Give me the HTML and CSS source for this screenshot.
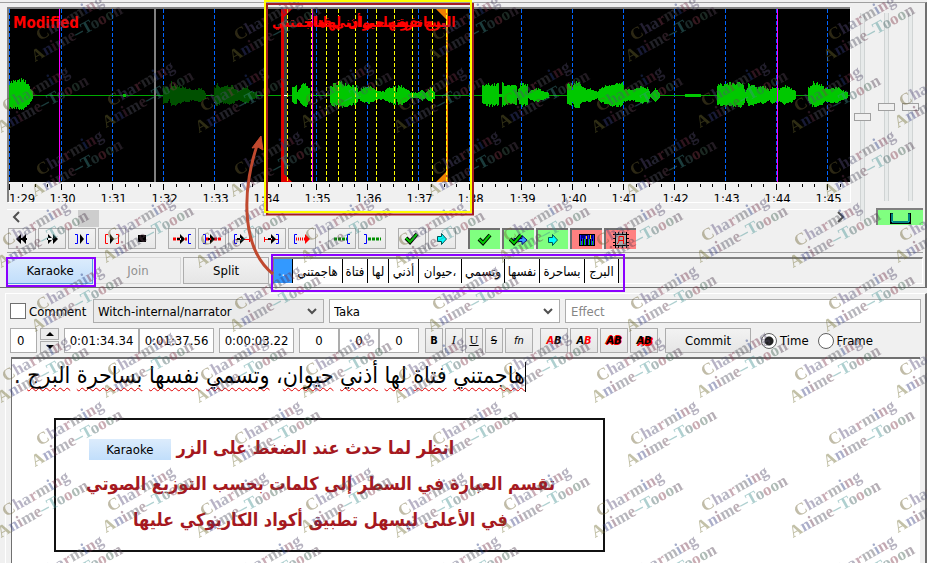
FILE: index.html
```html
<!DOCTYPE html>
<html lang="en">
<head>
<meta charset="utf-8">
<title>Subtitle editor</title>
<link rel="stylesheet" href="styles.css">
</head>
<body>
<main class="app">
  <section class="audio">
    <div class="audio-top">
      <div class="display-col">
        <svg class="display" id="display" role="img" aria-label="Audio waveform">
          <rect class="bg" width="100%" height="173"/>
          <g transform="translate(-9 -9)">
            <rect x="287" y="9" width="160" height="173" fill="#000"/>
            <g id="grid"></g>
            <rect x="9" y="95" width="2000" height="1" fill="#00a800"/>
            <path id="wave" fill="#00c800"/>
            <path id="wave-dim" fill="#005000"/>
            <rect x="154" y="9" width="2" height="173" fill="#808080"/>
            <path d="M59.5 9V182M312.500 9V182M777.500 9V182" stroke="#f0f"/>
            <rect x="283" y="9" width="4" height="173" fill="#404040"/>
            <rect x="283" y="95" width="4" height="1" fill="#fff"/>
            <rect x="281" y="9" width="3" height="173" fill="#e00000"/>
            <path d="M284 9h8l-8 8zM284 174l8 8h-8z" fill="#e00000"/>
            <rect x="446" y="9" width="2" height="173" fill="#f08000"/>
            <path d="M446 9h-10l10 10zM446 172l-10 10h10z" fill="#f08000"/>
            <path d="M287.500 9V182M311.500 9V182M326.500 9V182M338.500 9V182M355.500 9V182M376.500 9V182M394.500 9V182M412.500 9V182M432.500 9V182M446.500 9V182" stroke="#ff0" stroke-dasharray="4 2"/>
            <g class="syllables">
              <text x="299" y="27">هاجمتني</text><text x="319" y="27">فتاة</text><text x="332" y="27">لها</text><text x="347" y="27">أذني</text><text x="366" y="27">حيوان</text><text x="385" y="27">وتسمي</text><text x="403" y="27">نفسها</text><text x="422" y="27">بساحرة</text><text x="440" y="27">البرج</text>
            </g>
            <text class="modified" x="13" y="28">Modified</text>
            <g id="ruler"></g>
          </g>
        </svg>
        <div class="scrollbar">
          <button aria-label="Scroll left"><svg width="8" height="12"><path d="M7 1L2 6l5 5"/></svg></button>
          <div class="scroll-track"><span class="scroll-thumb"></span></div>
          <button aria-label="Scroll right"><svg width="8" height="12"><path d="M1 1l5 5-5 5"/></svg></button>
        </div>
      </div>
      <div class="sliders">
        <input class="long" type="range" value="50" aria-label="Horizontal zoom">
        <div class="pair">
          <div class="pair-row">
            <input type="range" value="50" aria-label="Vertical zoom">
            <input type="range" value="50" aria-label="Volume">
          </div>
          <button class="link" aria-label="Link zoom and volume"><svg width="22" height="12"><path d="M1.500 1v9.500h18V1" fill="none" stroke="#000" stroke-width="3"/><path d="M2 1.500v8.500h17V1.500" fill="none" stroke="#0ff"/></svg></button>
        </div>
      </div>
    </div>

    <div class="toolbar">
      <div class="group">
        <button aria-label="Previous line"><svg><path d="M9 5v10l-5-5zM14 5v10l-5-5zM9 9h6v2H9z"/></svg></button>
        <button aria-label="Next line"><svg><path d="M6 5v10l5-5zM11 5v10l5-5zM5 9h5v2H5z"/></svg></button>
        <button aria-label="Play selection"><svg><path class="b" d="M3 5.500h2.500v9H3M17 5.500h-2.500v9H17"/><path d="M8 5v10l4-5z"/></svg></button>
        <button aria-label="Play line"><svg><path class="r" d="M6 5.500H3.500v9H6M14 5.500h2.500v9H14"/><path d="M8 5v10l4-5z"/></svg></button>
        <button aria-label="Stop"><svg><path d="M6 6h8v7H6z"/></svg></button>
      </div>
      <div class="group">
        <button aria-label="Play before start"><svg><path class="r dots" d="M1 10h14"/><path d="M8 5v10l5-5zM5 9h4v2H5z"/><path class="b" d="M19 5.500h-2.500v9H19"/></svg></button>
        <button aria-label="Play after end"><svg><path class="r dots" d="M4 10h15"/><path d="M8 5v10l5-5zM6 9h3v2H6z"/><path class="b" d="M1 5.500h2.500v9H1"/></svg></button>
        <button aria-label="Play first part"><svg><path class="r" d="M4 10.500h14M17.500 8v5"/><path d="M8 5v10l5-5zM5 9h4v2H5z"/><path class="b" d="M5 5.500H2.500v9H5"/></svg></button>
        <button aria-label="Play last part"><svg><path class="r" d="M2 10.500h14M2.500 8v5"/><path d="M9 5v10l5-5zM6 9h4v2H6z"/><path class="b" d="M14 5.500h2.500v9H14"/></svg></button>
        <button aria-label="Play to end"><svg><path class="r dots2" d="M4 10h10"/><path d="M13 5v10l5-5z" fill="#f00"/><path class="b" d="M5 5.500H2.500v9H5"/></svg></button>
      </div>
      <div class="group">
        <button aria-label="Lead in"><svg><path class="g dots" d="M2 10h13"/><path class="b" d="M18 5.500h-2.500v9H18"/></svg></button>
        <button aria-label="Lead out"><svg><path class="g dots" d="M6 10h13"/><path class="b" d="M2 5.500h2.500v9H2"/></svg></button>
      </div>
      <div class="group">
        <button aria-label="Commit"><svg><path class="tick" d="M4 9l4 4 7-8"/><path class="tick2" d="M4 9l4 4 7-8"/></svg></button>
        <button aria-label="Go to selection"><svg><path class="arrow" d="M5.500 7.500h4v-3l5 5.500-5 5.500v-3h-4z"/></svg></button>
      </div>
      <div class="group toggles">
        <button class="on" aria-label="Auto commit"><svg><path class="tick" d="M4 9l4 4 7-8"/><path class="tick2" d="M4 9l4 4 7-8"/></svg></button>
        <button class="on" aria-label="Auto next"><svg><path d="M5 8.500h8v-3l5 4.500-5 4.500v-3H5z" fill="#39f" stroke="#008"/><path class="tick" d="M1 9l4 4 7-8"/><path class="tick2" d="M1 9l4 4 7-8"/></svg></button>
        <button class="on" aria-label="Auto scroll"><svg><path class="arrow" d="M5.500 7.500h4v-3l5 5.500-5 5.500v-3h-4z"/></svg></button>
        <button class="off" aria-label="Spectrum mode"><svg><path d="M2 4h16v12H2z"/><path d="M3 5h14v4H3z" fill="#008"/><path d="M3.500 5v10M5.500 8v7M8.500 6v9M11.500 5v10M14.500 8v7M16.500 5v10" stroke="#22f"/><path d="M4.500 11v4M7.500 9v6M12.500 9v6M15.500 11v4" stroke="#0c0"/><path d="M9.500 6v3M13.500 5v4" stroke="#fc0"/></svg></button>
        <button class="off" aria-label="Medusa shortcuts"><svg><path d="M4 3h12v14H4z" fill="#aaa"/><path d="M4.500 2v16M15.500 2v16M2 4.500h16M2 15.500h16M2 8.500h3M2 12.500h3M15 8.500h3M15 12.500h3M7.500 2v3M11.500 2v3M7.500 15v3M11.500 15v3" stroke="#000"/><path class="r" d="M6 14c2-1 2-4 2-7.500h4.500V14M8 10.500h5"/></svg></button>
      </div>
    </div>

    <div class="karaoke-row">
      <button class="btn active">Karaoke</button>
      <button class="btn" disabled>Join</button>
      <button class="btn">Split</button>
      <div class="strip">
        <span class="w1 sel">.</span><span class="w2">هاجمتني</span><span class="w3">فتاة</span><span class="w4">لها</span><span class="w5">أذني</span><span class="w6" dir="rtl">،حيوان</span><span class="w7">وتسمي</span><span class="w8">نفسها</span><span class="w9">بساحرة</span><span class="w10">البرج</span>
      </div>
    </div>
  </section>

  <section class="edit">
    <div class="fields">
      <label class="check"><input type="checkbox">Comment</label>
      <select aria-label="Style"><option>Witch-internal/narrator</option></select>
      <select class="white" aria-label="Actor"><option>Taka</option></select>
      <input class="effect" type="text" placeholder="Effect" aria-label="Effect">
    </div>
    <div class="timing">
      <div class="spin">
        <input type="text" value="0" aria-label="Layer">
        <div class="arrows"><button aria-label="Increase"><svg width="8" height="4"><path d="M0 4l4-4 4 4z"/></svg></button><button aria-label="Decrease"><svg width="8" height="4"><path d="M0 0l4 4 4-4z"/></svg></button></div>
      </div>
      <div class="joined">
        <input class="time" type="text" value="0:01:34.34" aria-label="Start"><input class="time" type="text" value="0:01:37.56" aria-label="End">
      </div>
      <input class="time" type="text" value="0:00:03.22" aria-label="Duration">
      <div class="joined">
        <input class="margin" type="text" value="0" aria-label="Left margin"><input class="margin" type="text" value="0" aria-label="Right margin"><input class="margin" type="text" value="0" aria-label="Vertical margin">
      </div>
      <div class="fmt">
        <button><b>B</b></button><button><i class="ser">I</i></button><button><u class="ser">U</u></button><button><s>S</s></button><button class="wide"><i>fn</i></button>
      </div>
      <div class="fmt colours">
        <button class="wide"><span class="red">A</span>B</button><button class="wide">A<span class="red">B</span></button><button class="wide outline">AB</button><button class="wide shadow">AB</button>
      </div>
      <button class="commit">Commit</button>
      <div class="radios">
        <label><input type="radio" name="unit" checked>Time</label>
        <label><input type="radio" name="unit">Frame</label>
      </div>
    </div>
    <div class="editor">
      <div class="line" dir="rtl" contenteditable="true" spellcheck="false" role="textbox" aria-label="Subtitle text"><span class="caret"></span><span class="sp">هاجمتني</span> <span class="sp">فتاة</span> <span class="sp">لها</span> <span class="sp">أذني</span> <span class="sp">حيوان</span>، <span class="sp">وتسمي</span> <span class="sp">نفسها</span> <span class="sp">بساحرة</span> <span class="sp">البرج</span> .</div>
      <div class="callout" dir="rtl">
        <p class="first">انظر لما حدث عند الضغط على الزر <span class="chip">Karaoke</span></p>
        <p>تقسم العبارة في السطر إلى كلمات بحسب التوزيع الصوتي</p>
        <p>في الأعلى ليسهل تطبيق أكواد الكاريوكي عليها</p>
      </div>
    </div>
  </section>

  <svg class="marks" aria-hidden="true">
    <defs>
      <g id="wm">
        <text class="wm-a" transform="translate(6 17) rotate(-30)"><tspan fill="#6b6030">C</tspan><tspan fill="#554a78">h</tspan><tspan fill="#505070">a</tspan><tspan fill="#803a50">r</tspan><tspan fill="#505058">m</tspan><tspan fill="#283c80">i</tspan><tspan fill="#703048">n</tspan><tspan fill="#504868">g</tspan></text>
        <text class="wm-b" transform="translate(1 38) rotate(-29)"><tspan fill="#706c30">A</tspan><tspan fill="#383e80">n</tspan><tspan fill="#603048">i</tspan><tspan fill="#505060">m</tspan><tspan fill="#604050">e</tspan><tspan fill="#409090">–T</tspan><tspan fill="#406060">o</tspan><tspan fill="#803848">o</tspan><tspan fill="#406050">o</tspan><tspan fill="#504050">n</tspan></text>
      </g>
      <pattern id="wmtile" width="198" height="135" patternUnits="userSpaceOnUse" x="0" y="-39">
        <use href="#wm" x="34" y="63"/>
        <use href="#wm" x="105" y="129"/><use href="#wm" x="105" y="-6"/>
        <use href="#wm" x="0" y="134"/><use href="#wm" x="0" y="-1"/>
        <use href="#wm" x="198" y="134"/><use href="#wm" x="198" y="-1"/>
      </pattern>
    </defs>
    <rect width="100%" height="100%" fill="url(#wmtile)" opacity=".42"/>
    <g fill="none" stroke-width="2">
      <path d="M267 213.500V4H473V214.500H266" stroke="#a51c24"/>
      <path d="M265 1H471V212H265z" stroke="#ff0"/>
      <path d="M7 258H95V286H7zM272 255H624V291H272z" stroke="#8b00ff"/>
      <path d="M273 274C243 250 240 196 258 142" stroke="#c0492f" stroke-width="3"/>
      <path d="M252 148L261 136l2 14-5-3z" fill="#c0492f" stroke="#c0492f" stroke-width="1"/>
    </g>
  </svg>
</main>
<script src="wave.js"></script>
</body>
</html>
```
FILE: styles.css
```css
* { box-sizing: border-box; }
body { margin: 0; background: #f0f0f0; color: #000; font: 13px "DejaVu Sans Condensed", "DejaVu Sans", sans-serif; }
button, input, select { font: inherit; color: inherit; margin: 0; padding: 0; }
p { margin: 0; }
.app { position: relative; min-height: 100vh; overflow: hidden; display: flex; flex-direction: column; gap: 5px; }

.audio { margin-top: 2px; padding: 4px 2px 1px 7px; border-top: 1px solid #a0a0a0; border-right: 2px solid #707070; border-bottom: 1px solid #707070; }
.audio-top { display: flex; gap: 4px; }
.display-col { flex: 1; min-width: 0; }
.display { display: block; width: 100%; height: 195px; border: solid #808080; border-width: 2px 0 0 2px; box-shadow: 1px 1px #fff; }
.display .bg { fill: #000; }
.display text { font-family: "DejaVu Sans Condensed", "DejaVu Sans", sans-serif; }
.syllables text { font-size: 14px; font-weight: bold; fill: #f00; text-anchor: middle; }
.display .modified { font-size: 15px; font-weight: bold; fill: #f00; }
.scrollbar { display: flex; align-items: center; height: 18px; margin-top: 7px; border-top: 1px solid #fff; }
.scrollbar button { width: 18px; height: 17px; border: 0; background: none; }
.scrollbar path { fill: none; stroke: #505050; stroke-width: 2; }
.scroll-track { flex: 1; height: 17px; }
.scroll-thumb { display: block; width: 21px; height: 17px; margin-left: 53px; background: #cdcdcd; }

.sliders { display: flex; gap: 5px; padding-top: 6px; }
.pair { width: 47px; display: flex; flex-direction: column; gap: 7px; }
.pair-row { display: flex; gap: 7px; padding-left: 2px; }
input[type="range"] { appearance: none; writing-mode: vertical-lr; direction: rtl; width: 17px; height: 188px; background: linear-gradient(90deg, transparent 6px, #d0d4d4 6px, #d0d4d4 7px, #e7eaea 7px, #e7eaea 10px, #d0d4d4 10px, #d0d4d4 11px, transparent 11px); }
input[type="range"].long { height: 208px; }
input[type="range"]::-webkit-slider-thumb { appearance: none; width: 17px; height: 8px; border: 1px solid #a0a0a0; background: #f0f0f0; }
.link { height: 17px; background: #80ff80; border: solid #808080; border-width: 2px 0 0 2px; }
.link svg { display: block; margin: auto; }

.toolbar { display: flex; gap: 12px; padding: 1px 0 2px 1px; border-bottom: 1px solid #a0a0a0; height: 26px; }
.group { display: flex; gap: 2px; }
.group button { width: 28px; height: 21px; border: 1px solid #adadad; background: linear-gradient(#f2f2f2, #e8e8e8); display: flex; align-items: center; justify-content: center; }
.group svg { width: 20px; height: 20px; flex: none; }
.toggles button { width: 32px; border-width: 2px 0 0 2px; border-color: #707070; }
.group .on { background: #80ff80; }
.group .off { background: #ff8080; }
.r, .b, .g { fill: none; }
.r { stroke: #f00; }
.b { stroke: #00f; }
.g { stroke: #009000; }
.dots { stroke-width: 3; stroke-dasharray: 3 1; }
.dots2 { stroke-width: 3; stroke-dasharray: 1 1; }
.tick { fill: none; stroke: #000; stroke-width: 4; }
.tick2 { fill: none; stroke: #0c0; stroke-width: 2; }
.arrow { fill: #0ff; stroke: #055; }

.karaoke-row { display: flex; gap: 2px; margin-top: 3px; height: 30px; padding: 1px 0 2px; }
.btn { width: 86px; border: 1px solid #adadad; background: linear-gradient(#f2f2f2, #e6e6e6); }
.btn.active { border-color: #569de5; background: linear-gradient(#dcecfc, #c1defb); }
.btn:disabled { color: #909090; border-color: #d8d8d8; background: #efefef; }
.strip { flex: 1; display: flex; margin-left: 2px; border: 1px solid #808080; border-top-width: 2px; border-right-color: #fff; border-bottom-color: #fff; }
.strip span { display: flex; align-items: center; justify-content: center; white-space: nowrap; background: #fff; box-shadow: inset -1px 0 #000; padding-right: 1px; }
.strip .sel { background: #3399ff; color: #fff; }
.w1 { width: 19px; } .w2 { width: 50px; } .w3 { width: 25px; } .w4 { width: 21px; } .w5 { width: 30px; }
.w6, .w7 { width: 43px; } .w8 { width: 35px; } .w9 { width: 45px; } .w10 { width: 34px; }

.edit { flex: 1; display: flex; flex-direction: column; margin-left: 5px; padding: 5px 4px 0; border: solid #fff; border-width: 1px 0 0 1px; border-right: 2px solid #707070; }
.fields { display: grid; grid-template-columns: 78px 231fr 231fr 356fr; gap: 5px; height: 24px; }
.check { display: flex; align-items: center; gap: 3px; }
input[type="checkbox"] { appearance: none; width: 16px; height: 16px; border: 1px solid #707070; background: #fff; }
select { appearance: none; min-width: 0; padding: 0 4px; border: 1px solid #adadad; background: no-repeat right 6px center / 10px 7px url("data:image/svg+xml,%3Csvg xmlns='http://www.w3.org/2000/svg' width='10' height='7'%3E%3Cpath d='M1 1l4 4 4-4' fill='none' stroke='%23505050' stroke-width='2'/%3E%3C/svg%3E") #ebebeb; }
select.white { background-color: #fff; }
input[type="text"] { border: 1px solid #adadad; background: #fff; min-width: 0; }
.effect { padding: 0 5px; }
.effect::placeholder { color: #858585; opacity: 1; }
.timing { display: flex; gap: 5px; height: 25px; margin-top: 5px; }
.spin { display: flex; gap: 3px; }
.spin input { width: 27px; padding-left: 6px; }
.arrows { display: flex; flex-direction: column; gap: 1px; }
.arrows button { flex: 1; width: 19px; border: 1px solid #adadad; background: #ececec; display: flex; align-items: center; justify-content: center; }
.joined { display: flex; }
.time { width: 75px; text-align: center; }
.margin { width: 40px; text-align: center; }
.fmt { display: flex; gap: 2px; margin-left: 1px; }
.fmt button { width: 18px; border: 1px solid #adadad; background: linear-gradient(#f2f2f2, #e6e6e6); font-size: 11px; }
.fmt .wide { width: 28px; }
.fmt .ser { font-family: "DejaVu Serif", serif; }
.colours { margin-left: 2px; }
.fmt.colours button { font-weight: bold; font-style: italic; }
.red { color: #f00; }
.outline { text-shadow: 1px 0 #f00, -1px 0 #f00, 0 1px #f00, 0 -1px #f00; }
.shadow { text-shadow: 1px 2px #f00, 2px 1px #f00; }
.commit { width: 86px; margin-left: 2px; border: 1px solid #adadad; background: linear-gradient(#f2f2f2, #e6e6e6); }
.radios { display: flex; gap: 9px; margin-left: 5px; }
.radios label { display: flex; align-items: center; gap: 3px; }
input[type="radio"] { appearance: none; width: 16px; height: 16px; border: 1px solid #606060; border-radius: 50%; background: #fff; }
input[type="radio"]:checked { background: radial-gradient(circle, #222 4px, #fff 5px); }

.editor { flex: 1; position: relative; margin: 4px 1px 0; background: #fff; border: solid #707070; border-width: 2px 0 0 1px; }
.line { padding: 0 2px; text-align: left; font-size: 23px; line-height: 32px; white-space: nowrap; }
.sp { text-decoration: underline wavy #d00 1px; text-underline-offset: 4px; text-decoration-skip-ink: none; }
.caret { display: inline-block; height: 30px; vertical-align: middle; border-right: 1px solid #000; }
.callout { position: absolute; left: 42px; top: 59px; width: 551px; padding: 10px 18px 12px 0; border: 2px solid #111; color: #a51820; font-size: 18px; font-weight: bold; line-height: 36px; text-align: center; white-space: nowrap; }
.first { padding-right: 98px; }
.chip { display: inline-block; width: 82px; height: 21px; line-height: 21px; background: linear-gradient(#dcecfc, #c1defb); color: #000; font-size: 13px; font-weight: normal; vertical-align: middle; }

.marks { position: absolute; inset: 0; width: 100%; height: 100%; pointer-events: none; }
.wm-a, .wm-b { font-family: "Liberation Serif", serif; font-size: 17px; font-weight: bold; }
```
FILE: wave.js
```js
const NS = "http://www.w3.org/2000/svg";
const STEP = 51.1;
const MID = 95;

// Speech bursts: lists of [x, amplitude] envelope points.
const bursts = [
  [[9, 13], [21, 15], [26, 13], [32, 4], [33, 1]],
  [[123, 1], [126, 1]],
  [[292, 8], [296, 10], [297, 3], [299, 6], [303, 12], [307, 11], [310, 3]],
  [[330, 9], [338, 13], [352, 10], [356, 9], [358, 3], [362, 7], [370, 8], [378, 4], [384, 4], [390, 8], [395, 10], [396, 3], [398, 10], [404, 8], [410, 3], [417, 2], [422, 5], [425, 2], [430, 7], [435, 2]],
  [[482, 9], [489, 11], [498, 11], [499, 1], [501, 1], [502, 12], [508, 9], [516, 9], [517, 3], [520, 11], [527, 11], [528, 3], [532, 5], [538, 7], [541, 5], [549, 2]],
  [[567, 10], [571, 11], [572, 6], [574, 13], [579, 12], [582, 7], [590, 6], [597, 3], [600, 7], [607, 10], [614, 12], [622, 11], [624, 6], [632, 5], [640, 8], [648, 7], [650, 1], [655, 6], [660, 2]],
  [[685, 1], [701, 1]],
  [[717, 10], [725, 11], [733, 12], [743, 12], [745, 3], [748, 11], [753, 10], [757, 7], [764, 9], [769, 4], [772, 9], [779, 6], [782, 9], [790, 8], [796, 3]],
  [[808, 7], [812, 12], [820, 11], [825, 6], [832, 8], [838, 7], [848, 2]]
];
const dimBursts = [
  [[163, 9], [167, 8], [169, 4], [171, 12], [177, 9], [185, 7], [193, 5], [200, 7], [206, 2]],
  [[214, 7], [217, 12], [220, 7], [226, 9], [232, 9], [238, 4], [242, 7], [247, 8], [250, 4], [257, 3]]
];

let seed = 7;
function random() {
  seed = (seed * 16807) % 2147483647;
  return seed / 2147483647;
}

function bars(list) {
  let d = "";
  for (const points of list) {
    for (let i = 0; i < points.length - 1; i++) {
      const [x0, a0] = points[i];
      const [x1, a1] = points[i + 1];
      for (let x = x0; x < x1; x++) {
        const amp = a0 + (a1 - a0) * (x - x0) / (x1 - x0);
        const up = Math.max(1, Math.round(amp * (0.8 + random() * 0.35)));
        const down = Math.max(1, Math.round(amp * (0.75 + random() * 0.25)));
        d += `M${x} ${MID - up}h1v${up + down + 1}h-1z`;
      }
    }
  }
  return d;
}

document.getElementById("wave").setAttribute("d", bars(bursts));
document.getElementById("wave-dim").setAttribute("d", bars(dimBursts));

function add(parent, name, attrs, text) {
  const node = document.createElementNS(NS, name);
  for (const key in attrs) node.setAttribute(key, attrs[key]);
  if (text) node.textContent = text;
  parent.appendChild(node);
}

const grid = document.getElementById("grid");
const ruler = document.getElementById("ruler");
const seconds = Math.ceil(document.getElementById("display").clientWidth / STEP);
for (let i = 0; i < seconds; i++) {
  const x = Math.floor(10 + i * STEP) + (i ? 0.5 : -0.5);
  add(grid, "path", { d: `M${x} 9V182`, stroke: "#0064ff", "stroke-dasharray": "4 2" });
  add(ruler, "path", { d: `M${x} 184v6`, stroke: "#000" });
  for (let q = 1; q < 4; q++) {
    add(ruler, "path", { d: `M${Math.floor(x + q * STEP / 4) + 0.5} 184v3`, stroke: "#000" });
  }
  const t = 89 + i;
  const label = `${Math.floor(t / 60)}:${String(t % 60).padStart(2, "0")}`;
  add(ruler, "text", { x: i ? x - 12 : 9, y: 203, "font-size": 13 }, label);
}
```
